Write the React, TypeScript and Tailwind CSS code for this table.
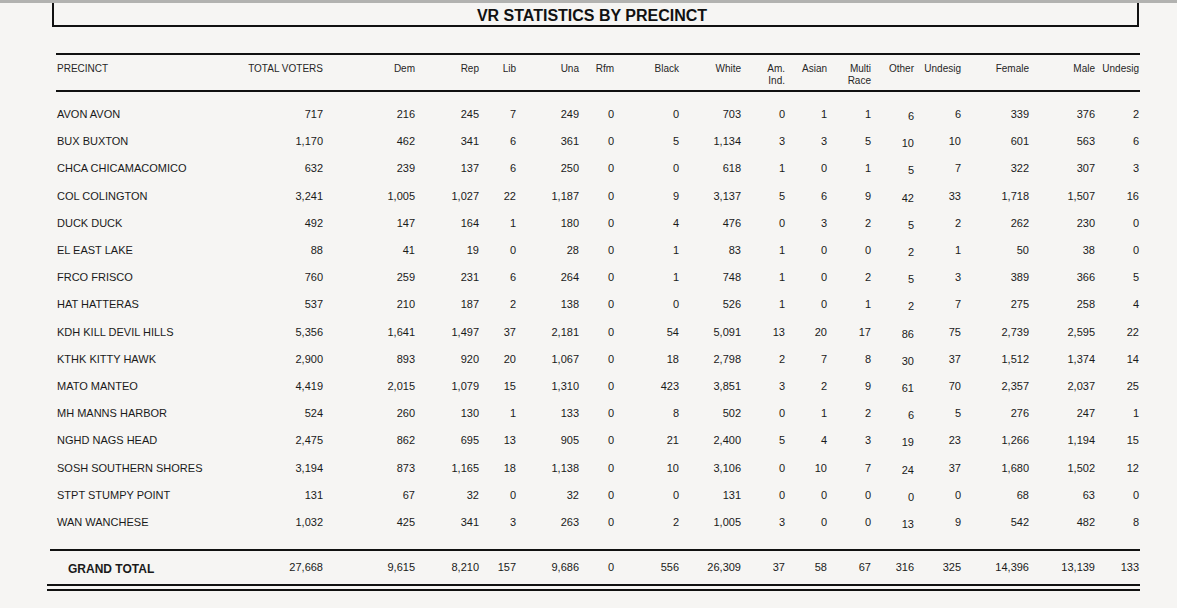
const rows: string[][] = [
  ["AVON AVON", "717", "216", "245", "7", "249", "0", "0", "703", "0", "1", "1", "6", "6", "339", "376", "2"],
  ["BUX BUXTON", "1,170", "462", "341", "6", "361", "0", "5", "1,134", "3", "3", "5", "10", "10", "601", "563", "6"],
  ["CHCA CHICAMACOMICO", "632", "239", "137", "6", "250", "0", "0", "618", "1", "0", "1", "5", "7", "322", "307", "3"],
  ["COL COLINGTON", "3,241", "1,005", "1,027", "22", "1,187", "0", "9", "3,137", "5", "6", "9", "42", "33", "1,718", "1,507", "16"],
  ["DUCK DUCK", "492", "147", "164", "1", "180", "0", "4", "476", "0", "3", "2", "5", "2", "262", "230", "0"],
  ["EL EAST LAKE", "88", "41", "19", "0", "28", "0", "1", "83", "1", "0", "0", "2", "1", "50", "38", "0"],
  ["FRCO FRISCO", "760", "259", "231", "6", "264", "0", "1", "748", "1", "0", "2", "5", "3", "389", "366", "5"],
  ["HAT HATTERAS", "537", "210", "187", "2", "138", "0", "0", "526", "1", "0", "1", "2", "7", "275", "258", "4"],
  ["KDH KILL DEVIL HILLS", "5,356", "1,641", "1,497", "37", "2,181", "0", "54", "5,091", "13", "20", "17", "86", "75", "2,739", "2,595", "22"],
  ["KTHK KITTY HAWK", "2,900", "893", "920", "20", "1,067", "0", "18", "2,798", "2", "7", "8", "30", "37", "1,512", "1,374", "14"],
  ["MATO MANTEO", "4,419", "2,015", "1,079", "15", "1,310", "0", "423", "3,851", "3", "2", "9", "61", "70", "2,357", "2,037", "25"],
  ["MH MANNS HARBOR", "524", "260", "130", "1", "133", "0", "8", "502", "0", "1", "2", "6", "5", "276", "247", "1"],
  ["NGHD NAGS HEAD", "2,475", "862", "695", "13", "905", "0", "21", "2,400", "5", "4", "3", "19", "23", "1,266", "1,194", "15"],
  ["SOSH SOUTHERN SHORES", "3,194", "873", "1,165", "18", "1,138", "0", "10", "3,106", "0", "10", "7", "24", "37", "1,680", "1,502", "12"],
  ["STPT STUMPY POINT", "131", "67", "32", "0", "32", "0", "0", "131", "0", "0", "0", "0", "0", "68", "63", "0"],
  ["WAN WANCHESE", "1,032", "425", "341", "3", "263", "0", "2", "1,005", "3", "0", "0", "13", "9", "542", "482", "8"],
];

const totals = ["27,668", "9,615", "8,210", "157", "9,686", "0", "556", "26,309", "37", "58", "67", "316", "325", "14,396", "13,139", "133"];

const headers = [
  "TOTAL VOTERS", "Dem", "Rep", "Lib", "Una", "Rfm", "Black", "White",
  "Am.\nInd.", "Asian", "Multi\nRace", "Other", "Undesig", "Female", "Male", "Undesig",
];

// column 12 ("Other") sits a little lower in the print
const OTHER = 11;

const grid =
  "grid grid-cols-[143px_123px_92px_64px_37px_63px_35px_65px_62px_44px_42px_44px_43px_47px_68px_66px_44px]";

function Rule({ className }: { className: string }) {
  return <div className={`h-[2px] bg-[#111] ${className}`} />;
}

export default function App() {
  return (
    <div
      className="min-h-[608px] w-[1177px] bg-[#f6f5f3] text-[#1a1a1a]"
      style={{ fontFamily: '"Liberation Sans", Arial, sans-serif' }}
    >
      <div className="h-[3px] bg-[#b2b2b0]" />

      <div className="ml-[52px] w-[1087px] border-x-2 border-b-2 border-[#111] pt-[4px] pr-[7px] text-center">
        <h1 className="text-[16px] font-bold leading-[18px] text-[#111]">
          VR STATISTICS BY PRECINCT
        </h1>
      </div>

      <Rule className="ml-[56px] mt-[26px] w-[1084px]" />

      <div className={`${grid} ml-[57px] w-[1082px] pt-[8px] pb-[3px] text-[10px] leading-[12px] text-[#262626]`}>
        <div className="h-[24px]">PRECINCT</div>
        {headers.map((h, i) => (
          <div key={i} className="whitespace-pre-line text-right">
            {h}
          </div>
        ))}
      </div>

      <Rule className="ml-[56px] w-[1084px]" />

      <div className="ml-[57px] w-[1082px] pt-[9px] pb-[13px] text-[11px] leading-[27.2px]">
        {rows.map((r) => (
          <div key={r[0]} className={grid}>
            <div className="whitespace-nowrap">{r[0]}</div>
            {r.slice(1).map((v, i) => (
              <div key={i} className="text-right">
                <span className={i === OTHER ? "inline-block translate-y-[2px]" : ""}>{v}</span>
              </div>
            ))}
          </div>
        ))}
      </div>

      <Rule className="ml-[50px] w-[1090px]" />

      <div className={`${grid} ml-[57px] w-[1082px] h-[33px] text-[11px] leading-[33px]`}>
        <div className="whitespace-nowrap pl-[11px] text-[12px] font-bold">
          <span className="inline-block translate-y-[2px]">GRAND TOTAL</span>
        </div>
        {totals.map((v, i) => (
          <div key={i} className="text-right">
            {v}
          </div>
        ))}
      </div>

      <Rule className="ml-[47px] w-[1093px]" />
      <Rule className="ml-[47px] mt-[2.5px] w-[1093px]" />
    </div>
  );
}
